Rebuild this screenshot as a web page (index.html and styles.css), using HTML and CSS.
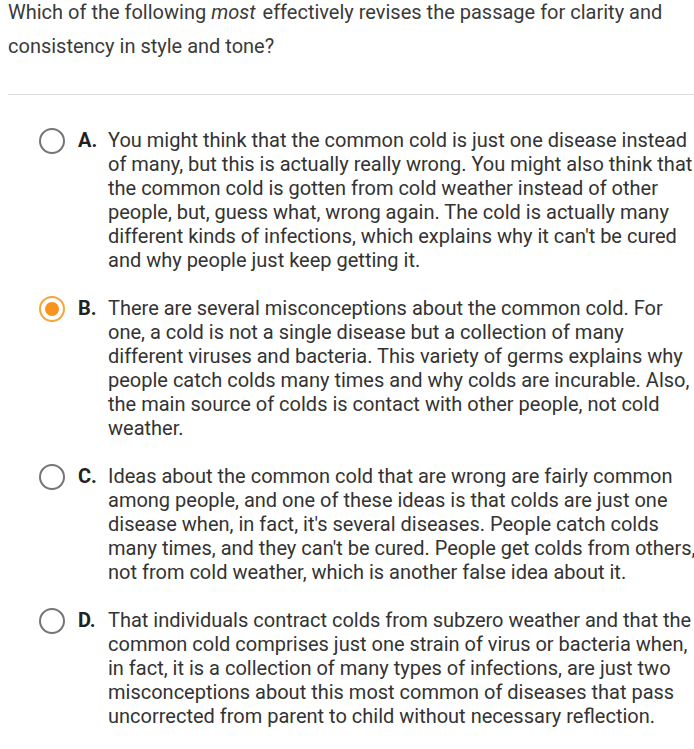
FILE: index.html
```html
<!DOCTYPE html>
<html>
<head>
<meta charset="utf-8">
<link rel="stylesheet" href="styles.css">
</head>
<body>
<div class="page">
  <p class="question">Which of the following <em>most</em> effectively revises the passage for clarity and consistency in style and tone?</p>
  <hr class="divider">
  <div class="options">
    <div class="option">
      <span class="radio"></span>
      <span class="letter">A.</span>
      <span class="text">You might think that the common cold is just one disease instead of many, but this is actually really wrong. You might also think that the common cold is gotten from cold weather instead of other people, but, guess what, wrong again. The cold is actually many different kinds of infections, which explains why it can't be cured and why people just keep getting it.</span>
    </div>
    <div class="option">
      <span class="radio selected"></span>
      <span class="letter">B.</span>
      <span class="text">There are several misconceptions about the common cold. For one, a cold is not a single disease but a collection of many different viruses and bacteria. This variety of germs explains why people catch colds many times and why colds are incurable. Also, the main source of colds is contact with other people, not cold weather.</span>
    </div>
    <div class="option">
      <span class="radio"></span>
      <span class="letter">C.</span>
      <span class="text">Ideas about the common cold that are wrong are fairly common among people, and one of these ideas is that colds are just one disease when, in fact, it's several diseases. People catch colds many times, and they can't be cured. People get colds from others, not from cold weather, which is another false idea about it.</span>
    </div>
    <div class="option">
      <span class="radio"></span>
      <span class="letter">D.</span>
      <span class="text">That individuals contract colds from subzero weather and that the common cold comprises just one strain of virus or bacteria when, in fact, it is a collection of many types of infections, are just two misconceptions about this most common of diseases that pass uncorrected from parent to child without necessary reflection.</span>
    </div>
  </div>
</div>
</body>
</html>
```
FILE: styles.css
```css
html, body {
  margin: 0;
  padding: 0;
  background: #ffffff;
}
body {
  font-family: Roboto, "Liberation Sans", sans-serif;
  color: #333333;
  overflow: hidden;
}
.page {
  padding: 0 0 0 8px;
}
.question {
  margin: -5px 0 0 0;
  font-size: 20px;
  line-height: 34px;
  color: #3a3a3a;
}
.question em {
  font-style: italic;
  padding-right: 2px;
}
.divider {
  margin: 31px 0 0 0;
  border: 0;
  border-top: 1px solid #dcdcdc;
  height: 0;
}
.options {
  display: flex;
  flex-direction: column;
  gap: 24px;
  padding: 33px 0 0 31px;
  margin-right: -8px;
}
.option {
  display: flex;
  align-items: flex-start;
  font-size: 20px;
  line-height: 24px;
}
.radio {
  flex: none;
  box-sizing: border-box;
  width: 26px;
  height: 26px;
  border: 2px solid #757575;
  border-radius: 50%;
  margin-top: 0;
  display: flex;
  align-items: center;
  justify-content: center;
}
.radio.selected {
  border-color: #f6a53a;
}
.radio.selected::after {
  content: "";
  width: 14px;
  height: 14px;
  border-radius: 50%;
  background: #f7931e;
}
.letter {
  flex: none;
  width: 30px;
  margin-left: 13px;
  font-weight: 700;
  color: #222222;
}
.text {
  flex: 1;
  color: #333333;
}
```
